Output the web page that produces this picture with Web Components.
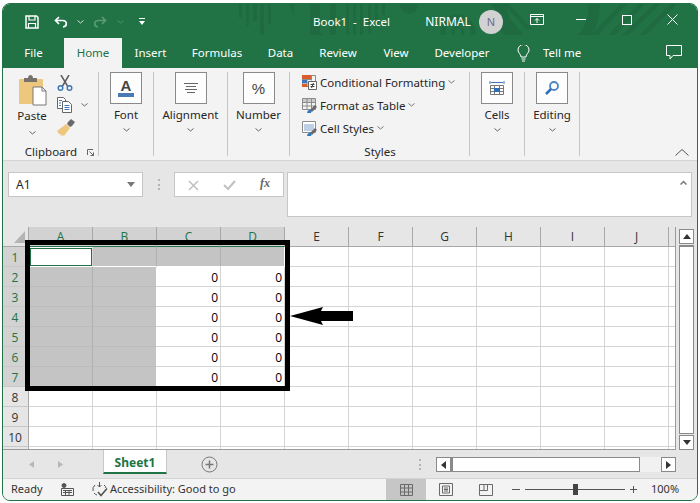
<!DOCTYPE html>
<html>
<head>
<meta charset="utf-8">
<title>Book1 - Excel</title>
<style>
  html, body { margin: 0; background: #fff; }
  body { font: 11.5px "Noto Sans", sans-serif; color: #262626; }
</style>
</head>
<body>
<xl-window>
  <xl-titlebar></xl-titlebar>
  <xl-tabs></xl-tabs>
  <xl-ribbon>
    <xl-group width="96" label="Clipboard" launcher><xl-clipboard></xl-clipboard></xl-group>
    <xl-group width="55"><xl-big-button label="Font">
      <div style="width:16px;text-align:center;font:600 15px/13px 'Liberation Sans',sans-serif;color:#444">A<div style="height:4px;background:#4a7ab5;margin-top:1px"></div></div>
    </xl-big-button></xl-group>
    <xl-group width="74"><xl-big-button label="Alignment">
      <svg width="14" height="11" viewBox="0 0 14 11" stroke="#666" fill="none"><path d="M0 .5h14M2 3.5h10M1 6.5h12M3 9.5h8"/></svg>
    </xl-big-button></xl-group>
    <xl-group width="62"><xl-big-button label="Number">
      <span style="font:15px 'Liberation Sans',sans-serif;color:#444">%</span>
    </xl-big-button></xl-group>
    <xl-group width="180" label="Styles"><xl-style-list></xl-style-list></xl-group>
    <xl-group width="55"><xl-big-button label="Cells">
      <svg width="16" height="17" viewBox="0 0 16 17" fill="none" stroke="#777"><path d="M1 1v3M15 1v3M2 2.500h12" stroke="#3f76b5"/><path d="M1.500 5.500h13v9h-13zM1.500 8.500h13M1.500 11.500h13M5.500 5.500v9M10.500 5.500v9"/><rect x="5" y="8" width="6" height="4" fill="#2f6fb5" stroke="none"/></svg>
    </xl-big-button></xl-group>
    <xl-group width="55"><xl-big-button label="Editing">
      <svg width="16" height="16" viewBox="0 0 16 16" fill="none"><circle cx="10" cy="6" r="4" stroke="#4a86c5" stroke-width="1.800"/><path d="M7 9l-5 5" stroke="#2f6fb5" stroke-width="2.500"/></svg>
    </xl-big-button></xl-group>
  </xl-ribbon>
  <xl-formula-bar></xl-formula-bar>
  <xl-sheet></xl-sheet>
  <xl-sheet-tabs></xl-sheet-tabs>
  <xl-status></xl-status>
</xl-window>

<script>
const chevron = (c = '#666') => `<svg width="7" height="4" viewBox="0 0 7 4" fill="none" stroke="${c}"><path d="M.5 .5l3 2.500 3-2.500"/></svg>`;

class XlWindow extends HTMLElement {
    constructor() {
        super();
        this.attachShadow({ mode: 'open' }).innerHTML = `
        <style>
            :host {
                display: flex; flex-direction: column; box-sizing: border-box;
                width: 696px; height: 498px; margin: 3px 2px 0;
                border: 1px solid #217346; border-radius: 8px;
                overflow: hidden; position: relative; background: #e6e6e6;
            }
        </style>
        <slot></slot>`;
    }
}

class XlTitlebar extends HTMLElement {
    constructor() {
        super();
        this.attachShadow({ mode: 'open' }).innerHTML = `
        <style>
            :host { display: flex; align-items: center; height: 31px; background: #217346; color: #fff; font-size: 12px; position: relative; }
            .deco { position: absolute; left: 0; top: -1px; }
            :host > * { flex: none; }
            .i { position: relative; display: flex; }
            .low { margin-top: 4px; }
            .avatar { width: 24px; height: 24px; border-radius: 50%; background: #d2d2d2; color: #6f6890; text-align: center; line-height: 24px; font-size: 11px; }
        </style>
        <svg class="deco" width="694" height="32" viewBox="3 3 694 32" fill="#1f6a41">
            <path d="M239 3h3v15h-3zM246 3h3v23h-3zM253 3h4v18h-4zM260 3h4v32h-4zM268 3h3v21h-3zM288 3l6 12V3zM310 3h10v30l10 6V3h6v37h-26zM346 3h3v35h-3zM353 3h3v35h-3zM360 3h3v36h-3zM368 3h3v30h-3zM375 3h3v22h-3zM382 3h3v12h-3z"/>
            <circle cx="409" cy="5" r="9"/>
            <circle cx="458" cy="32" r="15" fill="none" stroke="#1f6a41" stroke-width="5"/>
            <circle cx="458" cy="32" r="5" fill="none" stroke="#1f6a41" stroke-width="3"/>
            <circle cx="548" cy="8" r="46" fill="none" stroke="#1f6a41" stroke-width="11"/>
            <path d="M490 3h6l28 32h-7zM503 3h5l24 26h-6zM622 3h6l-30 32h-7zM640 3h6l-31 32h-7zM655 3h6l-32 32h-7zM672 3h6l-32 32h-7z"/>
        </svg>
        <svg class="i low" style="margin-left:22px" width="14" height="14" viewBox="0 0 14 14" fill="none" stroke="#fff" stroke-width="1.500"><path d="M1 1h10.500L13 2.500V13H1z"/><path d="M4 1v4h6V1M3.500 13V8.500h7V13" stroke-width="1.200"/></svg>
        <svg class="i low" style="margin-left:15px" width="14" height="12" viewBox="0 0 14 12" fill="none" stroke="#fff" stroke-width="1.700"><path d="M5 1L1.500 4.500 5 8M2 4.500h6.500c5 0 5 6 .5 6.500"/></svg>
        <span class="i low" style="margin-left:9px">${chevron('#ddd')}</span>
        <svg class="i low" style="margin-left:9px" width="14" height="12" viewBox="0 0 14 12" fill="none" stroke="#5a9a78" stroke-width="1.700"><path d="M9 1l3.500 3.500L9 8M12 4.500H5.500c-5 0-5 6-.5 6.500"/></svg>
        <span class="i low" style="margin-left:10px">${chevron('#4f9171')}</span>
        <svg class="i low" style="margin-left:15px" width="6" height="8" viewBox="0 0 6 8" fill="#fff"><path d="M0 0h6v1H0zM0 3h6L3 7z"/></svg>
        <span class="i low" style="margin-left:167px;width:79px;white-space:pre;justify-content:center;font-size:11.500px">Book1  -  Excel</span>
        <span class="i low" style="margin-left:33px;width:48px;justify-content:center">NIRMAL</span>
        <span class="i avatar low" style="margin-left:7px;display:block">N</span>
        <svg class="i" style="margin-left:27px" width="14" height="11" viewBox="0 0 14 11" fill="none" stroke="#fff"><path d="M.5 .5h13v10H.5zM.5 2.500h13M7 9V4.500M5 6.500l2-2 2 2"/></svg>
        <svg class="i" style="margin-left:32px" width="10" height="1" viewBox="0 0 10 1"><rect width="10" height="1" fill="#fff"/></svg>
        <svg class="i" style="margin-left:36px" width="10" height="10" viewBox="0 0 10 10" fill="none" stroke="#fff"><rect x=".5" y=".5" width="9" height="9"/></svg>
        <svg class="i" style="margin-left:35px" width="11" height="11" viewBox="0 0 11 11" stroke="#fff" fill="none"><path d="M.5 .5l10 10M10.500 .5l-10 10"/></svg>`;
    }
}

class XlTabs extends HTMLElement {
    constructor() {
        super();
        const tabs = [['File', 61], ['Home', 58], ['Insert', 57], ['Formulas', 76], ['Data', 51], ['Review', 64], ['View', 52], ['Developer', 80]];
        this.attachShadow({ mode: 'open' }).innerHTML = `
        <style>
            :host { display: flex; height: 33px; background: #217346; color: #fff; font-size: 11.500px; }
            .t { flex: none; box-sizing: border-box; height: 30px; margin-top: 3px; text-align: center; line-height: 30px; }
            .t:first-child { padding-right: 3px; }
            .on { background: #f3f3f3; color: #217346; }
            svg { flex: none; }
        </style>
        ${tabs.map(([n, w]) => `<div class="t ${n === 'Home' ? 'on' : ''}" style="width:${w}px">${n}</div>`).join('')}
        <svg style="margin:10px 0 0 15px" width="13" height="17" viewBox="0 0 13 17" fill="none" stroke="#fff"><path d="M4 12c0-3-3-4-3-7a5.500 5.500 0 0 1 11 0c0 3-3 4-3 7zM4.500 14h4M5 16h3"/></svg>
        <div style="margin:3px 0 0 13px;line-height:30px">Tell me</div>
        <svg style="margin:10px 0 0 85px" width="16" height="15" viewBox="0 0 16 15" fill="none" stroke="#fff"><path d="M.5 .5h15v10H7l-3 3.500v-3.500H.5z"/></svg>`;
    }
}

class XlRibbon extends HTMLElement {
    constructor() {
        super();
        this.attachShadow({ mode: 'open' }).innerHTML = `
        <style>
            :host { display: flex; flex: none; height: 88px; padding-top: 4px; background: #f3f3f3; border-bottom: 1px solid #d4d4d4; }
            svg { margin: auto 8px 4px auto; }
        </style>
        <slot></slot>
        <svg width="14" height="7" viewBox="0 0 14 7" fill="none" stroke="#555"><path d="M.5 6.500L7 .5l6.500 6"/></svg>`;
    }
}

class XlGroup extends HTMLElement {
    constructor() {
        super();
        this.attachShadow({ mode: 'open' });
    }
    connectedCallback() {
        const label = this.getAttribute('label');
        this.shadowRoot.innerHTML = `
        <style>
            :host {
                display: flex; flex-direction: column; flex: none; box-sizing: border-box; height: 88px;
                width: ${this.getAttribute('width')}px; position: relative;
                background: linear-gradient(#c6c6c6, #c6c6c6) right top / 1px 84px no-repeat;
            }
            .body { flex: 1; min-height: 0; }
            .label { height: 16px; line-height: 16px; text-align: center; padding-bottom: 0; }
            svg { position: absolute; right: 5px; bottom: 4px; }
        </style>
        <div class="body"><slot></slot></div>
        ${label ? `<div class="label">${label}</div>` : ''}
        ${this.hasAttribute('launcher') ? `<svg width="7" height="7" viewBox="0 0 7 7" fill="none" stroke="#666"><path d="M.5 6V.5H6M2.500 2.500l4 4M3.500 6.500h3v-3"/></svg>` : ''}`;
    }
}

class XlBigButton extends HTMLElement {
    constructor() {
        super();
        this.attachShadow({ mode: 'open' });
    }
    connectedCallback() {
        this.shadowRoot.innerHTML = `
        <style>
            :host { display: flex; flex-direction: column; align-items: center; margin-right: 1px; }
            .box { box-sizing: border-box; width: 32px; height: 32px; background: #fdfdfd; border: 1px solid #8a8a8a; display: flex; align-items: center; justify-content: center; }
            .label { margin-top: 3px; line-height: 16px; white-space: nowrap; }
            .c { display: flex; margin-top: 5px; }
        </style>
        <div class="box"><slot></slot></div>
        <div class="label">${this.getAttribute('label')}</div>
        <div class="c">${chevron()}</div>`;
    }
}

class XlClipboard extends HTMLElement {
    constructor() {
        super();
        this.attachShadow({ mode: 'open' }).innerHTML = `
        <style>
            :host { display: flex; padding-left: 4px; }
            .paste { width: 50px; flex: none; display: flex; flex-direction: column; align-items: center; padding-top: 3px; }
            .paste span { line-height: 16px; margin-top: 1px; }
            .paste .c { display: flex; margin-top: 7px; }
            .side { display: flex; flex-direction: column; gap: 6px; padding-top: 3px; }
            .row { display: flex; align-items: center; height: 16px; gap: 8px; }
            svg { flex: none; display: block; }
        </style>
        <div class="paste">
            <svg width="29" height="32" viewBox="0 0 29 32">
                <rect x="1" y="4" width="24" height="25" rx="1" fill="#eec77f"/>
                <path d="M6 3h4c0-4 5-4 5 0h4v4H6z" fill="#77726c"/>
                <path d="M15 12h9l4 4v14H15z" fill="#fff" stroke="#777"/>
                <path d="M24 12v4h4" fill="none" stroke="#777"/>
            </svg>
            <span>Paste</span>
            <div class="c">${chevron()}</div>
        </div>
        <div class="side">
            <svg width="16" height="16" viewBox="0 0 16 16" fill="none"><path d="M5.500 11L12 0M10.500 11L4 0" stroke="#5e5e5e" stroke-width="1.500"/><circle cx="3.500" cy="13" r="2.300" stroke="#3f76b5" stroke-width="1.400"/><circle cx="12.500" cy="13" r="2.300" stroke="#3f76b5" stroke-width="1.400"/></svg>
            <div class="row">
                <svg width="16" height="16" viewBox="0 0 16 16" fill="#fff" stroke="#666"><path d="M.5 .5h6l2 2v9h-8z"/><path d="M5.500 4.500h6l3 3v8h-9z"/><path d="M2 3.500h3M2 6h2M2 8.500h2M7.500 8.500h5M7.500 10.500h5M7.500 12.500h5" stroke="#3f76b5" fill="none"/></svg>
                ${chevron()}
            </div>
            <svg width="18" height="18" viewBox="0 0 18 18"><path d="M11 3l3-3 4 3-3 4-2 1-3-3z" fill="#6a6a6a"/><path d="M0 12l9-7 4 4-6 8-2-1-1 1-1-2-1 0z" fill="#eec77f"/></svg>
        </div>`;
    }
}

class XlStyleList extends HTMLElement {
    constructor() {
        super();
        const grid = '<path d="M1.500 1.500h13v11h-13zM1.500 5.500h13M1.500 9h13M6 1.500v11M10.500 1.500v11" fill="none" stroke="#8c8c8c"/>';
        const brush = '<path d="M9 13l5-5 2 2-5 5z" fill="#6a6a6a"/><path d="M6 16c0-3 3-4 5-3l-1 3z" fill="#2f79c0"/>';
        const rows = [
            ['Conditional Formatting', `<svg width="16" height="16" viewBox="0 0 16 16"><path d="M1.500 1.500h13v11h-13zM6 1.500v11M10.500 1.500v5M1.500 5.500h9M1.500 9h5" fill="none" stroke="#8c8c8c"/><path d="M1 1h9v4H1z" fill="#d95c2b"/><path d="M1 6h5v3H1z" fill="#3f76b5"/><path d="M1 10h5v3H1z" fill="#d95c2b"/><path d="M7.500 7.500h8v8h-8z" fill="#fff" stroke="#666"/><path d="M9.500 10.500h4M9.500 12.500h4M10.500 14l2-5" stroke="#444" fill="none"/></svg>`],
            ['Format as Table', `<svg width="16" height="16" viewBox="0 0 16 16"><rect x="1" y="1" width="14" height="4" fill="#c9c9c9"/>${grid}${brush}</svg>`],
            ['Cell Styles', `<svg width="16" height="16" viewBox="0 0 16 16"><path d="M1.500 1.500h13v11h-13z" fill="#fff" stroke="#8c8c8c"/><rect x="3" y="4" width="10" height="7" fill="#bdd0e6"/>${brush}</svg>`]
        ];
        this.attachShadow({ mode: 'open' }).innerHTML = `
        <style>
            :host { display: flex; flex-direction: column; gap: 7px; padding: 2px 0 0 11px; }
            .row { display: flex; align-items: center; height: 16px; white-space: nowrap; }
            svg { flex: none; }
            .n { margin-left: 3px; }
            .row span:last-child { margin-left: 3px; display: flex; }
        </style>
        ${rows.map(([n, i]) => `<div class="row">${i}<span class="n">${n}</span><span>${chevron('#777')}</span></div>`).join('')}`;
    }
}

class XlFormulaBar extends HTMLElement {
    constructor() {
        super();
        this.attachShadow({ mode: 'open' }).innerHTML = `
        <style>
            :host { display: flex; flex: none; box-sizing: border-box; height: 66px; padding: 11px 0 0 5px; background: #e6e6e6; align-items: flex-start; }
            .box { box-sizing: border-box; flex: none; background: #fff; border: 1px solid #c6c6c6; height: 25px; display: flex; align-items: center; }
            .name { width: 135px; padding: 0 7px; justify-content: space-between; font-size: 12px; }
            .dots { flex: none; width: 2px; height: 11px; margin: 7px 14px 0 15px; background: repeating-linear-gradient(#b4b4b4 0 2px, transparent 2px 4.500px); }
            .fx { width: 110px; position: relative; }
            .fx svg { position: absolute; top: 7px; }
            .fx i { position: absolute; left: 85px; top: 3px; font: italic 700 12px "Liberation Serif", serif; color: #666; }
            .input { width: 405px; height: 45px; margin-left: 3px; position: relative; }
            .input svg { position: absolute; right: 4px; top: 7px; }
        </style>
        <div class="box name"><span>A1</span><svg width="8" height="5" viewBox="0 0 8 5"><path d="M0 0h8L4 5z" fill="#777"/></svg></div>
        <div class="dots"></div>
        <div class="box fx">
            <svg style="left:13px" width="11" height="11" viewBox="0 0 11 11" stroke="#c0c0c0" stroke-width="1.500" fill="none"><path d="M1 1l9 9M10 1l-9 9"/></svg>
            <svg style="left:48px" width="13" height="11" viewBox="0 0 13 11" stroke="#c0c0c0" stroke-width="2" fill="none"><path d="M1 5l4 4 7-8"/></svg>
            <i>fx</i>
        </div>
        <div class="box input"><svg width="7" height="5" viewBox="0 0 7 5" fill="none" stroke="#777" stroke-width="1.500"><path d="M.5 4.500l3-3 3 3"/></svg></div>`;
    }
}

class XlSheet extends HTMLElement {
    constructor() {
        super();
        const cols = 'ABCDEFGHIJ'.split('');
        let cells = `<div class="c corner"><svg width="11" height="12" viewBox="0 0 11 12"><path d="M11 0v12H0z" fill="#b4b4b4"/></svg></div>`;
        cols.forEach((c, i) => cells += `<div class="c head ${i < 4 ? 'sel' : ''}">${c}</div>`);
        cells += `<div class="c head"></div>`;
        for (let r = 1; r <= 11; r++) {
            cells += `<div class="c rh ${r <= 7 ? 'sel' : ''}">${r < 11 ? r : ''}</div>`;
            for (let i = 0; i < 11; i++) {
                let cls = 'c';
                let txt = '';
                if (r === 1 && i === 0) cls += ' active';
                else if (r === 1 && i < 4) cls += ' gray top' + (i === 3 ? ' last' : '');
                else if (r > 1 && r <= 7 && i < 2) cls += ' gray' + (i === 1 ? ' last' : '') + (r === 7 ? ' end' : '');
                else if (r > 1 && r <= 7 && i < 4) txt = '0';
                cells += `<div class="${cls}">${txt}</div>`;
            }
        }
        this.attachShadow({ mode: 'open' }).innerHTML = `
        <style>
            :host { display: flex; flex: none; height: 223px; background: #e6e6e6; position: relative; }
            .grid {
                flex: none; width: 673px; height: 223px; overflow: hidden;
                display: grid; grid-template-columns: 26px repeat(10, 64px) 8px; grid-auto-rows: 20px;
                background: #fff; box-sizing: border-box; border-right: 1px solid #9a9a9a; border-bottom: 1px solid #9a9a9a;
                font: 12px "Open Sans", sans-serif; color: #000;
            }
            .c { box-sizing: border-box; border-right: 1px solid #d4d4d4; border-bottom: 1px solid #d4d4d4; text-align: right; padding-right: 2px; line-height: 21px; position: relative; overflow: hidden; }
            .corner { background: #e6e6e6; border-right: 1px solid #a8a8a8; border-bottom: 1px solid #a8a8a8; }
            .corner svg { position: absolute; left: 11px; top: 4px; }
            .head { background: #e6e6e6; text-align: center; padding: 0; border-right: 1px solid #a8a8a8; border-bottom: 1px solid #a8a8a8; line-height: 20px; color: #333; }
            .head.sel { background: #d2d2d2; color: #217346; border-bottom: 1px solid #217346; }
            .rh { background: #e6e6e6; text-align: center; padding: 0 1px 0 0; border-right: 1px solid #a8a8a8; border-bottom: 1px solid #c8c8c8; color: #333; }
            .rh.sel { background: #d2d2d2; color: #217346; }
            .gray { background: #c4c4c4; border-right-color: #b0b0b0; border-bottom-color: #bcbcbc; }
            .gray.top { border-bottom-color: #fff; }
            .gray.last { border-right: 1px solid #fff; }
            .gray.end { border-bottom: 1px solid #fff; }
            .active { border-bottom-color: #fff; }
            .active::after { content: ""; position: absolute; left: 1px; top: 1px; right: 0; bottom: 0; border: 1px solid #217346; }
            .bar { flex: none; width: 15px; margin-left: 3px; padding-top: 2px; height: 223px; box-sizing: border-box; display: flex; flex-direction: column; }
            .btn { box-sizing: border-box; flex: none; height: 15px; background: #fff; border: 1px solid #8a8a8a; display: flex; align-items: center; justify-content: center; }
            .thumb { flex: 1; background: #fff; border: 1px solid #8a8a8a; border-top-width: 2px; box-sizing: border-box; margin: 1px 0; }
            .mark { position: absolute; left: 22px; top: 13px; width: 265px; height: 151px; box-sizing: border-box; border: 5px solid #000; pointer-events: none; }
            .arrow { position: absolute; left: 287px; top: 79px; }
        </style>
        <div class="grid">${cells}</div>
        <div class="bar">
            <div class="btn"><svg width="8" height="5" viewBox="0 0 8 5"><path d="M4 0l4 5H0z" fill="#333"/></svg></div>
            <div class="thumb"></div>
            <div class="btn"><svg width="8" height="5" viewBox="0 0 8 5"><path d="M0 0h8L4 5z" fill="#333"/></svg></div>
        </div>
        <div class="mark"></div>
        <svg class="arrow" width="64" height="20" viewBox="290 306 64 20"><path d="M290 316l33-9-2 4h32v10h-32l2 4z" fill="#000"/></svg>`;
    }
}

class XlSheetTabs extends HTMLElement {
    constructor() {
        super();
        this.attachShadow({ mode: 'open' }).innerHTML = `
        <style>
            :host { display: flex; flex: none; height: 28px; background: #e6e6e6; border-top: 0; box-sizing: border-box; align-items: flex-start; }
            :host > * { flex: none; }
            .tab { box-sizing: border-box; width: 64px; height: 24px; background: #fff; border: 1px solid #c8c8c8; border-top: 0; border-bottom: 2px solid #217346; color: #217346; font-weight: 700; font-size: 12px; text-align: center; line-height: 25px; }
            .nav { margin-top: 11px; }
            .plus { margin: 6px 0 0 34px; }
            .dots { width: 2px; height: 11px; margin: 9px 0 0 201px; background: repeating-linear-gradient(#b4b4b4 0 2px, transparent 2px 4.500px); }
            .h { display: flex; margin: 7px 0 0 15px; height: 15px; width: 240px; }
            .btn { box-sizing: border-box; flex: none; width: 15px; height: 15px; background: #fff; border: 1px solid #8a8a8a; display: flex; align-items: center; justify-content: center; }
            .thumb { flex: none; box-sizing: border-box; width: 189px; background: #fff; border: 1px solid #8a8a8a; border-left-width: 2px; }
            .track { flex: 1; background: #f1f1f1; }
        </style>
        <svg class="nav" style="margin-left:26px" width="5" height="7" viewBox="0 0 5 7"><path d="M5 0v7L0 3.500z" fill="#b8b8b8"/></svg>
        <svg class="nav" style="margin-left:24px" width="5" height="7" viewBox="0 0 5 7"><path d="M0 0v7l5-3.500z" fill="#b8b8b8"/></svg>
        <div class="tab" style="margin-left:40px">Sheet1</div>
        <svg class="plus" width="17" height="17" viewBox="0 0 17 17" fill="none" stroke="#777"><circle cx="8.500" cy="8.500" r="7.500"/><path d="M4.500 8.500h8M8.500 4.500v8" stroke-width="1.500"/></svg>
        <div class="dots"></div>
        <div class="h">
            <div class="btn"><svg width="5" height="8" viewBox="0 0 5 8"><path d="M5 0v8L0 4z" fill="#333"/></svg></div>
            <div class="thumb"></div>
            <div class="track"></div>
            <div class="btn"><svg width="5" height="8" viewBox="0 0 5 8"><path d="M0 0v8l5-4z" fill="#333"/></svg></div>
        </div>`;
    }
}

class XlStatus extends HTMLElement {
    constructor() {
        super();
        this.attachShadow({ mode: 'open' }).innerHTML = `
        <style>
            :host { display: flex; flex: none; height: 22px; align-items: center; background: #f3f3f3; box-sizing: border-box; border-top: 1px solid #d4d4d4; font-size: 11px; color: #333; }
            :host > * { flex: none; }
            span { margin-top: -2px; }
            .view { height: 21px; width: 40px; display: flex; align-items: center; justify-content: center; }
            .view.on { background: #c6c6c6; }
        </style>
        <span style="margin-left:8px;width:50px">Ready</span>
        <svg width="13" height="13" viewBox="0 0 13 13" fill="none" stroke="#555"><circle cx="3" cy="2.500" r="2" fill="#555"/><path d="M.5 5.500h12v7H.5zM2 7.500h9M2 9.500h9M4.500 7v5M8 7v5"/></svg>
        <svg style="margin-left:18px" width="16" height="15" viewBox="0 0 16 15" fill="none" stroke="#555"><path d="M7.500 0v5M5.500 3l2 2 2-2M3 3a6 6 0 0 0-2 6M2 11a6 6 0 0 0 3 2M12 3a5 5 0 0 1 2 3"/><path d="M6 10l3 3.500 6-7" stroke-width="1.600"/></svg>
        <span style="margin-left:2px;width:276px">Accessibility: Good to go</span>
        <div class="view on"><svg width="13" height="12" viewBox="0 0 13 12" fill="none" stroke="#6a6a6a"><path d="M.5 .5h12v11H.5zM.5 4h12M.5 8h12M4.500 .5v11M8.500 .5v11"/></svg></div>
        <div class="view"><svg width="14" height="13" viewBox="0 0 14 13" fill="none" stroke="#6a6a6a"><path d="M.5 .5h13v12H.5zM3.500 3h7v7h-7zM5 5h4M5 6.500h4M5 8h4"/></svg></div>
        <div class="view"><svg width="14" height="12" viewBox="0 0 14 12" fill="none" stroke="#6a6a6a"><path d="M.5 .5h13v11H.5zM.5 6.500h8M5 .5v6M8.500 .5v6"/></svg></div>
        <svg style="margin-left:6px" width="8" height="1" viewBox="0 0 8 1"><rect width="8" height="1" fill="#555"/></svg>
        <div style="position:relative;margin-left:5px;width:100px;height:1px;background:#555"><div style="position:absolute;left:48px;top:-5px;width:5px;height:11px;background:#444"></div></div>
        <svg style="margin-left:5px" width="7" height="7" viewBox="0 0 7 7" stroke="#555" fill="none"><path d="M0 3.500h7M3.500 0v7"/></svg>
        <span style="margin-left:14px">100%</span>`;
    }
}

customElements.define('xl-window', XlWindow);
customElements.define('xl-titlebar', XlTitlebar);
customElements.define('xl-tabs', XlTabs);
customElements.define('xl-ribbon', XlRibbon);
customElements.define('xl-group', XlGroup);
customElements.define('xl-big-button', XlBigButton);
customElements.define('xl-clipboard', XlClipboard);
customElements.define('xl-style-list', XlStyleList);
customElements.define('xl-formula-bar', XlFormulaBar);
customElements.define('xl-sheet', XlSheet);
customElements.define('xl-sheet-tabs', XlSheetTabs);
customElements.define('xl-status', XlStatus);
</script>
</body>
</html>
